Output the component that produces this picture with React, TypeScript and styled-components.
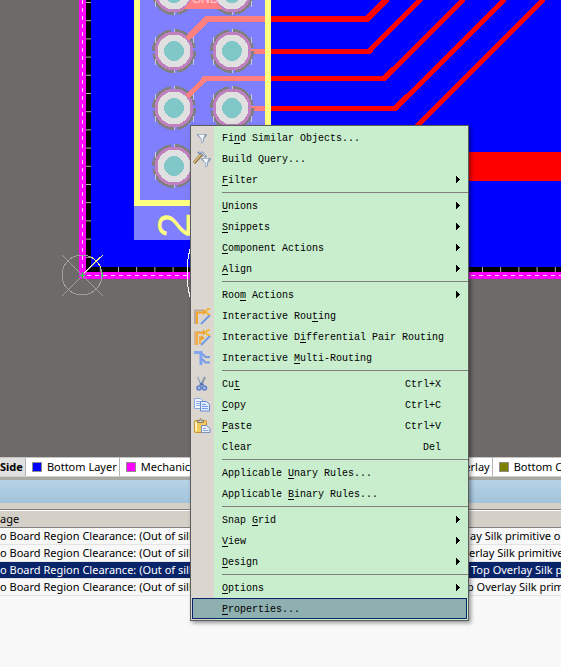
import React from "react";
import styled, { createGlobalStyle, css } from "styled-components";

const GlobalStyle = createGlobalStyle`
  *, *::before, *::after { box-sizing: border-box; }
  html, body, #root { height: 100%; }
  body { margin: 0; background: #f8f8f8; overflow: hidden; }
`;

const Workspace = styled.main`
  position: relative;
  display: flex;
  flex-direction: column;
  min-height: 100%;
  overflow: hidden;
  font-family: "Noto Sans", sans-serif;
  font-size: 11px;
  color: #000;
`;

const BoardCanvas = styled.svg`
  display: block;
  width: 100%;
  height: 457px;
  background: #6e6a69;
  shape-rendering: crispEdges;
`;

const LayerTabs = styled.nav`
  display: flex;
  height: 20px;
  background: #fff;
  border-top: 1px solid #c8c4c0;
  border-bottom: 1px solid #d4d0c8;
  overflow: hidden;
`;

const LayerTab = styled.button<{ $active?: boolean; $grow?: boolean }>`
  display: flex;
  flex: none;
  align-items: center;
  gap: 5px;
  padding: 0 2px 0 6px;
  border: 0;
  border-right: 1px solid #b4b4b4;
  background: #fff;
  color: inherit;
  font: inherit;
  line-height: 18px;
  white-space: nowrap;
  ${(p) =>
    p.$active &&
    css`
      padding: 0 2px 0 0;
      background: #e0e0e0;
      font-weight: 700;
    `}
  ${(p) =>
    p.$grow &&
    css`
      width: 373px;
      justify-content: space-between;
    `}
`;

const LayerName = styled.span`
  display: flex;
  align-items: center;
  gap: 5px;
`;

const Swatch = styled.span<{ $color: string }>`
  width: 10px;
  height: 10px;
  border: 1px solid #909090;
  background: ${(p) => p.$color};
`;

const PanelTitle = styled.div`
  height: 26px;
  border-top: 3px solid #a8a8a4;
  background: linear-gradient(#b6d2e6, #a2c4da);
`;

const MessagePanel = styled.section`
  flex: 1;
  padding-top: 6px;
  background: linear-gradient(#d4d0c8 6px, #f8f8f8 6px);
`;

const MessageTable = styled.table`
  width: 100%;
  border-collapse: separate;
  border-spacing: 0;
  table-layout: fixed;
`;

const HeadCell = styled.th`
  height: 19px;
  padding: 0;
  border-top: 1px solid #808080;
  border-bottom: 1px solid #808080;
  box-shadow: inset 0 1px #fff;
  background: #d4d0c8;
  font-weight: 400;
  line-height: 17px;
  text-align: left;
`;

const MessageCell = styled.td<{ $selected?: boolean }>`
  height: 17px;
  padding: 0;
  border-bottom: 1px solid #e4e4e4;
  background: ${(p) => (p.$selected ? "#0a246a" : "#f8f8f8")};
  color: ${(p) => (p.$selected ? "#fff" : "#000")};
  line-height: 16px;
  white-space: nowrap;
  overflow: hidden;
`;

const MessageStart = styled.span<{ $width: number }>`
  display: inline-block;
  width: ${(p) => p.$width}px;
`;

const Menu = styled.div`
  position: absolute;
  top: 125px;
  left: 190px;
  width: 279px;
  padding: 1px 0;
  border: 1px solid #5c5c5c;
  background: linear-gradient(90deg, #dbd7d0 23px, #c8eecd 23px);
  box-shadow: 2px 2px 4px rgba(0, 0, 0, 0.4);
  font-family: "Liberation Mono", monospace;
  font-size: 10px;
`;

const MenuItem = styled.button<{ $active?: boolean }>`
  display: flex;
  align-items: center;
  width: calc(100% - 2px);
  height: 21px;
  margin: 0 1px;
  padding: 0;
  border: 1px solid ${(p) => (p.$active ? "#0a246a" : "transparent")};
  background: ${(p) => (p.$active ? "#8eb0b0" : "transparent")};
  color: #000;
  font: inherit;
  text-align: left;
  white-space: nowrap;
`;

const MenuIcon = styled.svg`
  flex: none;
  width: 18px;
  height: 18px;
  margin-right: 11px;
`;

const Label = styled.span`
  flex: 1;
  padding-top: 2px;
  line-height: 16px;
`;

const Mnemonic = styled.u`
  text-underline-offset: 2px;
  text-decoration-thickness: 1px;
`;

const Shortcut = styled.kbd`
  margin-right: 25px;
  padding-top: 2px;
  font: inherit;
  line-height: 16px;
`;

const Arrow = styled.svg`
  width: 4px;
  height: 7px;
  margin-right: 6px;
  shape-rendering: crispEdges;
`;

const Separator = styled.hr`
  height: 1px;
  margin: 2px 0 2px 31px;
  border: 0;
  background: #808080;
`;

type IconName = "funnel" | "query" | "route" | "pair" | "multi" | "cut" | "copy" | "paste";

const Funnel = ({ x = 0, y = 0 }: { x?: number; y?: number }) => (
  <g transform={`translate(${x} ${y})`}>
    <path d="M0 0h10v1.500L7 5v3L4 9.500V5L0 1.500z" fill="#93a3ba" />
    <path d="M1.500 .8h6L5.800 5v2.800l-1 .6V5z" fill="#f4f7fb" />
  </g>
);

const icons: Record<IconName, React.ReactNode> = {
  funnel: <Funnel x={4} y={5} />,
  query: (
    <>
      <path d="M1 13 9 4" stroke="#80643a" strokeWidth="3" />
      <path d="M1 12.500 9 3.500" stroke="#e6c478" strokeWidth="1.500" />
      <path d="M4 2.500 7 .8l3 1 4 5-2 1-3-3.500-2 1z" fill="#8495b4" />
      <path d="m6 2 2-.5 4 4.500" fill="none" stroke="#dce4f0" />
      <Funnel x={8} y={8} />
    </>
  ),
  route: (
    <>
      <path d="M2 17V3.500h9" fill="none" stroke="#b9a9a0" strokeWidth="2" />
      <path d="M4 17V5.500h7" fill="none" stroke="#f6a72c" strokeWidth="2" />
      <path d="m10 2 4 3-4 3z" fill="#f0a030" />
      <path d="m8 17 9-9" stroke="#6f9be6" strokeWidth="2" />
      <path d="M17 2c-5-1-5 6 0 5" fill="none" stroke="#f2b534" strokeWidth="2" />
    </>
  ),
  pair: (
    <>
      <path d="M2 17V4h9" fill="none" stroke="#d9b48c" strokeWidth="2" />
      <path d="M4 17V5h7M7 16V9.500h2" fill="none" stroke="#f2ac40" strokeWidth="2" />
      <path d="m10 1 3 3.500-3 3zM8 7l4 3-4 2.500z" fill="#eaa030" />
      <path d="m8 17 9-9" stroke="#6f9be6" strokeWidth="2" />
      <path d="M17 2c-5-1-5 6 0 5" fill="none" stroke="#f2b534" strokeWidth="2" />
    </>
  ),
  multi: (
    <>
      <path d="M1 3.500h8" stroke="#86a8ec" strokeWidth="3" />
      <path d="M8 2v14" stroke="#7da3f0" strokeWidth="3" />
      <path d="M9 4.500 12.500 8H17M9 10l3.500 3.500H17" fill="none" stroke="#789ce4" strokeWidth="2" />
    </>
  ),
  cut: (
    <>
      <path d="m5 2 4 8.500M12 2 8 10.500" stroke="#8b96a6" strokeWidth="2" />
      <path d="m5.500 2 3.500 7" stroke="#dfe5ee" />
      <circle cx="6" cy="13" r="2" fill="#a9c0ee" stroke="#5f80c8" strokeWidth="1.500" />
      <circle cx="11.500" cy="13" r="2" fill="#a9c0ee" stroke="#5f80c8" strokeWidth="1.500" />
      <path d="m7 10 1.500-1.500L10.500 10" stroke="#5273ba" fill="none" strokeWidth="2" />
    </>
  ),
  copy: (
    <>
      <path d="M1.500 2.500h6l3 3v7h-9z" fill="#f0f5ff" stroke="#8ba9de" />
      <path d="M3 5.500h4M3 7.500h5M3 9.500h5" stroke="#8caee8" />
      <path d="M7.500 5.500h6l3 3v6.500h-9z" fill="#e4edff" stroke="#6389cf" />
      <path d="M9 8.500h4M9 10.500h6M9 12.500h6" stroke="#759ce2" />
    </>
  ),
  paste: (
    <>
      <rect x="1.500" y="3.500" width="12" height="12" rx="1" fill="#f4c95e" stroke="#c69233" />
      <path d="M3 5v9" stroke="#fff0b4" strokeWidth="2" />
      <path d="M4.500 5.500v-2h2l1-2 1 2h2v2z" fill="#c9ccd4" stroke="#8c7a58" />
      <path d="M8.500 8.500h5l3.500 3v4H8.500z" fill="#e8eefc" stroke="#7c90b6" />
      <path d="M10 11.500h3M10 13.500h5.500" stroke="#8ba5d6" />
    </>
  ),
};

type Entry = {
  text: string;
  /** Index of the underlined access key within the text. */
  accessKey?: number;
  icon?: IconName;
  shortcut?: string;
  submenu?: boolean;
  active?: boolean;
};

const groups: Entry[][] = [
  [
    { text: "Find Similar Objects...", accessKey: 2, icon: "funnel" },
    { text: "Build Query...", icon: "query" },
    { text: "Filter", accessKey: 0, submenu: true },
  ],
  [
    { text: "Unions", accessKey: 0, submenu: true },
    { text: "Snippets", accessKey: 0, submenu: true },
    { text: "Component Actions", accessKey: 0, submenu: true },
    { text: "Align", accessKey: 0, submenu: true },
  ],
  [
    { text: "Room Actions", accessKey: 3, submenu: true },
    { text: "Interactive Routing", accessKey: 15, icon: "route" },
    { text: "Interactive Differential Pair Routing", accessKey: 13, icon: "pair" },
    { text: "Interactive Multi-Routing", accessKey: 12, icon: "multi" },
  ],
  [
    { text: "Cut", accessKey: 2, icon: "cut", shortcut: "Ctrl+X" },
    { text: "Copy", accessKey: 0, icon: "copy", shortcut: "Ctrl+C" },
    { text: "Paste", accessKey: 0, icon: "paste", shortcut: "Ctrl+V" },
    { text: "Clear", shortcut: "Del" },
  ],
  [
    { text: "Applicable Unary Rules...", accessKey: 11 },
    { text: "Applicable Binary Rules...", accessKey: 11 },
  ],
  [
    { text: "Snap Grid", accessKey: 5, submenu: true },
    { text: "View", accessKey: 0, submenu: true },
    { text: "Design", accessKey: 0, submenu: true },
  ],
  [
    { text: "Options", accessKey: 0, submenu: true },
    { text: "Properties...", accessKey: 0, active: true },
  ],
];

const messages = [
  { width: 470, tail: "ay Silk primitive or" },
  { width: 469, tail: "erlay Silk primitive" },
  { width: 471, tail: "Top Overlay Silk p", selected: true },
  { width: 467, tail: "p Overlay Silk prim" },
];

const EntryLabel = ({ text, at }: { text: string; at?: number }) =>
  at === undefined ? (
    <Label>{text}</Label>
  ) : (
    <Label>
      {text.slice(0, at)}
      <Mnemonic>{text[at]}</Mnemonic>
      {text.slice(at + 1)}
    </Label>
  );

const Pad = ({ x, y }: { x: number; y: number }) => (
  <g transform={`translate(${x} ${y})`}>
    <circle r="20.500" fill="none" stroke="#808080" strokeWidth="3" strokeDasharray="29 3" />
    <path d="M0-22v44M-19-14v6M-19 8v6M19-14v6M19 8v6" stroke="#c8c8d8" />
    <circle r="18" fill="#e0e0e0" stroke="#c080c0" strokeWidth="3" />
    <circle r="10" fill="#80c8c8" />
  </g>
);

const traces: [string, number][] = [
  ["M187 39 207 19H367L387-1", 6],
  ["M249 51.500H369L421-1", 5],
  ["M187 97 205 78.500H384L464-1", 5],
  ["M249 108.500H395L505-1", 5],
  ["M544-1 412 131", 5],
];

const Board = () => (
  <BoardCanvas role="img" aria-label="Circuit board layout">
    <defs>
      <clipPath id="component"><rect x="134" y="0" width="137" height="240" /></clipPath>
      <pattern id="ticks-x" x="118" width="18.200" height="6" y="267" patternUnits="userSpaceOnUse">
        <rect width="1" height="6" fill="#b8b8b8" />
      </pattern>
      <pattern id="ticks-y" x="86" width="6" height="18.200" y="2" patternUnits="userSpaceOnUse">
        <rect width="6" height="1" fill="#b8b8b8" />
      </pattern>
    </defs>
    <rect x="79" y="0" width="100%" height="279" fill="#f0f" />
    <rect x="86" y="0" width="100%" height="272" fill="#000" />
    <rect x="86" y="267" width="100%" height="5" fill="url(#ticks-x)" />
    <rect x="86" y="0" width="5" height="266" fill="url(#ticks-y)" />
    <rect x="91" y="0" width="100%" height="267" fill="#00f" />
    <path d="M82.500 0V275.500H4000" fill="none" stroke="#ffd0ff" strokeDasharray="4 4" />
    <rect x="134" y="0" width="137" height="240" fill="#8080ff" />
    <g fill="none" stroke="#f00">
      {traces.map(([d, w]) => <path key={d} d={d} strokeWidth={w} />)}
    </g>
    <rect x="440" y="152" width="100%" height="29" fill="#f00" />
    <g fill="none" stroke="#ff8080" clipPath="url(#component)">
      {traces.map(([d, w]) => <path key={d} d={d} strokeWidth={w} />)}
    </g>
    <path d="M187 162 200 149" stroke="#ff8080" strokeWidth="5" />
    {[-7, 51, 108, 166].map((y) => (
      <g key={y}>
        <Pad x={174} y={y} />
        <Pad x={232} y={y} />
      </g>
    ))}
    <path d="M184 9 191 0H215L222 9z" fill="#ff8080" />
    <text x="192" y="3" fontSize="12" fontFamily="Liberation Sans, sans-serif" fill="#ffc8d8">GND</text>
    <path d="M187 39 191 35M187 97 191 93" stroke="#ff8080" strokeWidth="5" />
    <path d="M137 0V202.500H268V0" fill="none" stroke="#ffff80" strokeWidth="6" />
    <text transform="translate(190 238) rotate(-90)" fontSize="46" fontFamily="Liberation Sans, sans-serif" fill="#ffff80">2</text>
    <ellipse cx="207" cy="273" rx="20" ry="45" fill="none" stroke="#fff" />
    <g fill="none" stroke="#a0a0a0">
      <circle cx="82" cy="275" r="20" />
      <path d="M62 255 103 296M62 296 103 255" />
      <path d="M84 273 92 265" stroke="#fff" />
      <path d="M92 265 103 255M91 257 Q98 261 101 268" stroke="#ffff80" />
      <path d="M82 272v7M79 275h7M102 272v6" stroke="#30c050" />
    </g>
  </BoardCanvas>
);

export default function App() {
  return (
    <>
      <GlobalStyle />
      <Workspace>
        <Board />
        <LayerTabs aria-label="Layers">
          <LayerTab $active>Side</LayerTab>
          <LayerTab><Swatch $color="#0000ff" />Bottom Layer</LayerTab>
          <LayerTab $grow>
            <LayerName><Swatch $color="#ff00ff" />Mechanical</LayerName>
            <span>Overlay</span>
          </LayerTab>
          <LayerTab><Swatch $color="#808000" />Bottom O</LayerTab>
        </LayerTabs>
        <PanelTitle />
        <MessagePanel aria-label="Messages">
          <MessageTable>
            <thead>
              <tr><HeadCell scope="col">age</HeadCell></tr>
            </thead>
            <tbody>
              {messages.map((m) => (
                <tr key={m.tail}>
                  <MessageCell $selected={m.selected}>
                    <MessageStart $width={m.width}>o Board Region Clearance: (Out of silk</MessageStart>
                    {m.tail}
                  </MessageCell>
                </tr>
              ))}
            </tbody>
          </MessageTable>
        </MessagePanel>
        <Menu role="menu">
          {groups.map((group, i) => (
            <React.Fragment key={i}>
              {i > 0 && <Separator />}
              {group.map((e) => (
                <MenuItem key={e.text} role="menuitem" $active={e.active} aria-haspopup={e.submenu ? "menu" : undefined}>
                  <MenuIcon viewBox="0 0 18 18" aria-hidden="true">{e.icon && icons[e.icon]}</MenuIcon>
                  <EntryLabel text={e.text} at={e.accessKey} />
                  {e.shortcut && <Shortcut>{e.shortcut}</Shortcut>}
                  {e.submenu && (
                    <Arrow viewBox="0 0 4 7" aria-hidden="true"><path d="M0 0 4 3.500 0 7z" /></Arrow>
                  )}
                </MenuItem>
              ))}
            </React.Fragment>
          ))}
        </Menu>
      </Workspace>
    </>
  );
}
